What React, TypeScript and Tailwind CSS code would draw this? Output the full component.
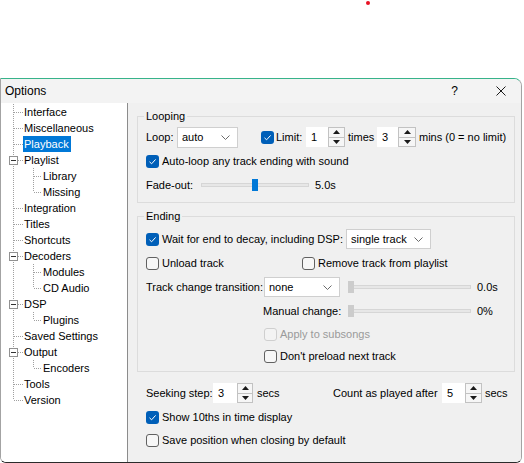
import React from 'react';

// tree rows of the Options dialog
type Node = { label: string; lvl: 1 | 2; box?: boolean; last?: boolean; sel?: boolean };

const tree: Node[] = [
  { label: 'Interface', lvl: 1 },
  { label: 'Miscellaneous', lvl: 1 },
  { label: 'Playback', lvl: 1, sel: true },
  { label: 'Playlist', lvl: 1, box: true },
  { label: 'Library', lvl: 2 },
  { label: 'Missing', lvl: 2, last: true },
  { label: 'Integration', lvl: 1 },
  { label: 'Titles', lvl: 1 },
  { label: 'Shortcuts', lvl: 1 },
  { label: 'Decoders', lvl: 1, box: true },
  { label: 'Modules', lvl: 2 },
  { label: 'CD Audio', lvl: 2, last: true },
  { label: 'DSP', lvl: 1, box: true },
  { label: 'Plugins', lvl: 2, last: true },
  { label: 'Saved Settings', lvl: 1 },
  { label: 'Output', lvl: 1, box: true },
  { label: 'Encoders', lvl: 2, last: true },
  { label: 'Tools', lvl: 1 },
  { label: 'Version', lvl: 1, last: true },
];

const dot = { stroke: '#a0a0a0', strokeWidth: 1, strokeDasharray: '1 1', shapeRendering: 'crispEdges' as const };

const TreeRow: React.FC<{ n: Node }> = ({ n }) => {
  const w = n.lvl === 1 ? 22 : 41;
  return (
    <div className="flex h-[16px] items-center">
      <svg width={w} height={16} className="shrink-0">
        {n.lvl === 1 ? (
          <>
            <line x1={12.5} y1={0} x2={12.5} y2={n.last ? 8 : 16} {...dot} />
            <line x1={13} y1={8.5} x2={22} y2={8.5} {...dot} />
            {n.box && (
              <>
                <rect x={8.5} y={4.5} width={8} height={8} fill="#fff" stroke="#919191" shapeRendering="crispEdges" />
                <line x1={10} y1={8.5} x2={15} y2={8.5} stroke="#333" shapeRendering="crispEdges" />
              </>
            )}
          </>
        ) : (
          <>
            <line x1={12.5} y1={0} x2={12.5} y2={16} {...dot} />
            <line x1={32.5} y1={0} x2={32.5} y2={n.last ? 8 : 16} {...dot} />
            <line x1={33} y1={8.5} x2={41} y2={8.5} {...dot} />
          </>
        )}
      </svg>
      <span
        className={
          n.sel
            ? 'flex h-[16px] items-center bg-[#0078d7] pl-[1px] pr-[2px] text-white'
            : 'flex h-[16px] items-center pl-[1px] pr-[2px] text-black'
        }
      >
        {n.label}
      </span>
    </div>
  );
};

const Check: React.FC<{ on?: boolean; off?: boolean }> = ({ on, off }) =>
  on ? (
    <span className="flex h-[13px] w-[13px] shrink-0 items-center justify-center rounded-[3px] bg-[#005fb8]">
      <svg width={9} height={9} viewBox="0 0 9 9">
        <path d="M1.5 4.8 L3.6 6.8 L7.6 2.4" fill="none" stroke="#fff" strokeWidth={1} />
      </svg>
    </span>
  ) : off ? (
    <span className="h-[13px] w-[13px] shrink-0 rounded-[3px] border border-[#cfcfcf] bg-[#f3f3f3]" />
  ) : (
    <span className="h-[13px] w-[13px] shrink-0 rounded-[3px] border border-[#616161] bg-[#f7f7f7]" />
  );

const Chevron = () => (
  <svg width={9} height={5} viewBox="0 0 9 5">
    <path d="M0.5 0.5 L4.5 4.5 L8.5 0.5" fill="none" stroke="#6b6b6b" strokeWidth={1} />
  </svg>
);

const Select: React.FC<{ value: string; className: string }> = ({ value, className }) => (
  <div className={`flex items-center justify-between border border-[#cfcfcf] bg-white pl-[4px] pr-[7px] ${className}`}>
    <span>{value}</span>
    <Chevron />
  </div>
);

const Tri: React.FC<{ up?: boolean }> = ({ up }) => (
  <svg width={7} height={4} viewBox="0 0 7 4">
    <path d={up ? 'M0 4 L3.5 0 L7 4 Z' : 'M0 0 L3.5 4 L7 0 Z'} fill="#1a1a1a" />
  </svg>
);

const Spin: React.FC<{ value: string; input: string; btn: string }> = ({ value, input, btn }) => (
  <div className="flex h-[20px] items-stretch">
    <div className={`flex items-center bg-white pl-[5px] ${input}`}>{value}</div>
    <div className={`flex flex-col border border-[#c2c2c2] bg-[#f6f6f6] ${btn}`}>
      <div className="flex flex-1 items-center justify-center border-b border-[#c2c2c2]">
        <Tri up />
      </div>
      <div className="flex flex-1 items-center justify-center">
        <Tri />
      </div>
    </div>
  </div>
);

const Slider: React.FC<{ className: string; thumb: string }> = ({ className, thumb }) => (
  <div className={`relative flex h-[12px] items-center ${className}`}>
    <div className="h-[4px] w-full border border-[#d6d6d6] bg-[#e7e7e7]" />
    <div className={`absolute top-0 h-[12px] w-[6px] ${thumb}`} />
  </div>
);

const Group: React.FC<{ title: string; className: string; children: React.ReactNode }> = ({ title, className, children }) => (
  <div className={`relative border border-[#dcdcdc] ${className}`}>
    <span className="absolute -top-[9px] left-[6px] bg-[#f0f0f0] px-[2px] leading-[16px]">{title}</span>
    {children}
  </div>
);

export default function App() {
  return (
    <div
      className="relative h-[463px] w-[524px] overflow-hidden bg-white text-[11px] text-black"
      style={{ fontFamily: '"Liberation Sans", Arial, sans-serif' }}
    >
      <div className="absolute left-[366px] top-[1px] h-[4px] w-[4px] rounded-full bg-[#e81123]" />
      <div className="h-[78px]" />

      <div className="flex h-[385px] w-[522px] flex-col overflow-hidden rounded-tr-[8px] rounded-b-[6px] border-x border-t border-b border-x-[#a3a3a3] border-t-[#37b38a] border-b-[#2b2b2b]">
        {/* title bar */}
        <div className="flex h-[24px] shrink-0 items-center bg-[#f3f3f3] pl-[4px] text-[12px]">
          <span>Options</span>
          <span className="ml-auto mr-[38px] text-[12px]">?</span>
          <svg width={10} height={10} viewBox="0 0 10 10" className="mr-[15px]">
            <path d="M0.5 0.5 L9.5 9.5 M9.5 0.5 L0.5 9.5" stroke="#1a1a1a" strokeWidth={1} />
          </svg>
        </div>

        <div className="flex min-h-0 flex-1">
          {/* tree */}
          <div className="w-[127px] shrink-0 border-r border-[#8c8c8c] bg-white pt-[1px]">
            {tree.map((n) => (
              <TreeRow key={n.label} n={n} />
            ))}
          </div>

          {/* page */}
          <div className="flex-1 bg-[#f0f0f0] pl-[9px] pr-[6px] pt-[13px]">
            <Group title="Looping" className="h-[87px] pl-[8px] pt-[8px]">
              <div className="flex h-[24px] items-center">
                <span className="w-[31px]">Loop:</span>
                <Select value="auto" className="h-[21px] w-[61px]" />
                <span className="ml-[23px]">
                  <Check on />
                </span>
                <span className="ml-[2px] w-[30px]">Limit:</span>
                <Spin value="1" input="w-[22px]" btn="w-[17px]" />
                <span className="ml-[3px] w-[29px]">times</span>
                <Spin value="3" input="w-[21px]" btn="w-[18px]" />
                <span className="ml-[3px]">mins (0 = no limit)</span>
              </div>
              <div className="flex h-[24px] items-center">
                <Check on />
                <span className="ml-[3px]">Auto-loop any track ending with sound</span>
              </div>
              <div className="flex h-[24px] items-center">
                <span className="w-[55px]">Fade-out:</span>
                <Slider className="w-[108px]" thumb="left-[51px] bg-[#0078d7]" />
                <span className="ml-[6px]">5.0s</span>
              </div>
            </Group>

            <Group title="Ending" className="mt-[13px] h-[156px] pl-[8px] pt-[10px]">
              <div className="flex h-[24px] items-center">
                <Check on />
                <span className="ml-[3px] w-[184px]">Wait for end to decay, including DSP:</span>
                <Select value="single track" className="h-[20px] w-[85px]" />
              </div>
              <div className="flex h-[24px] items-center">
                <span className="flex w-[156px] items-center">
                  <Check />
                  <span className="ml-[3px]">Unload track</span>
                </span>
                <Check />
                <span className="ml-[3px]">Remove track from playlist</span>
              </div>
              <div className="flex h-[24px] items-center">
                <span className="w-[118px]">Track change transition:</span>
                <Select value="none" className="h-[20px] w-[76px]" />
                <Slider className="ml-[8px] w-[123px]" thumb="left-0 bg-[#cccccc]" />
                <span className="ml-[6px]">0.0s</span>
              </div>
              <div className="flex h-[24px] items-center">
                <span className="ml-[117px] w-[85px]">Manual change:</span>
                <Slider className="w-[123px]" thumb="left-0 bg-[#cccccc]" />
                <span className="ml-[6px]">0%</span>
              </div>
              <div className="flex h-[22px] items-center pl-[118px]">
                <Check off />
                <span className="ml-[3px] text-[#9a9a9a]">Apply to subsongs</span>
              </div>
              <div className="flex h-[22px] items-center pl-[118px]">
                <Check />
                <span className="ml-[3px]">Don't preload next track</span>
              </div>
            </Group>

            <div className="mt-[9px] pl-[9px]">
              <div className="flex h-[24px] items-center">
                <span className="w-[67px]">Seeking step:</span>
                <Spin value="3" input="w-[24px]" btn="w-[16px]" />
                <span className="ml-[4px] w-[76px]">secs</span>
                <span className="w-[109px]">Count as played after</span>
                <Spin value="5" input="w-[23px]" btn="w-[17px]" />
                <span className="ml-[3px]">secs</span>
              </div>
              <div className="flex h-[24px] items-center">
                <Check on />
                <span className="ml-[3px]">Show 10ths in time display</span>
              </div>
              <div className="flex h-[22px] items-center">
                <Check />
                <span className="ml-[3px]">Save position when closing by default</span>
              </div>
            </div>
          </div>
        </div>
      </div>
    </div>
  );
}
